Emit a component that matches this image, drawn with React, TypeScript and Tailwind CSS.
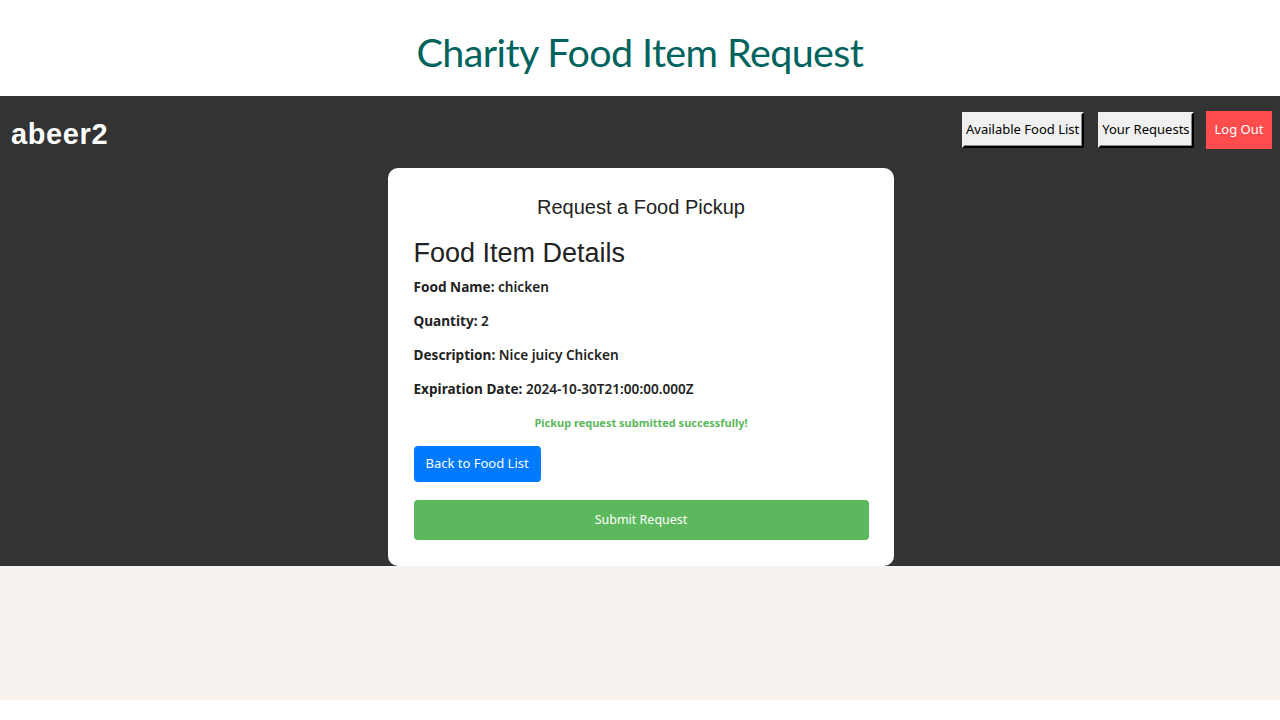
export default function App() {
  const details = [
    { label: "Food Name:", value: "chicken" },
    { label: "Quantity:", value: "2" },
    { label: "Description:", value: "Nice juicy Chicken" },
    { label: "Expiration Date:", value: "2024-10-30T21:00:00.000Z" },
  ];

  return (
    <div className="w-[1280px] h-[720px] bg-white flex flex-col">
      {/* Titulo do slide */}
      <div className="h-[96px] flex items-center justify-center">
        <h1 className="text-[39.5px] text-[#00635d] font-['Lato',sans-serif] tracking-[-0.6px] mt-[8px]">
          Charity Food Item Request
        </h1>
      </div>

      {/* Area escura com a navbar e o cartao */}
      <div className="h-[470px] bg-[#333333] flex flex-col">
        <div className="h-[72px] flex items-start justify-between pl-[11px] pr-[8px] pt-[15px]">
          <span className="text-white font-bold text-[29px] tracking-[0.6px] leading-[38px] font-['Liberation_Sans',Arial,sans-serif] mt-[4px]">
            abeer2
          </span>
          <div className="flex items-center font-['Noto_Sans',sans-serif] text-[13px] h-[38px]">
            <button className="h-[36px] px-[2.5px] bg-[#f0f0f0] text-black border-2 border-[#f0f0f0] border-r-black border-b-black shadow-[inset_-1px_-1px_0_#888]">
              Available Food List
            </button>
            <button className="ml-[14px] h-[36px] px-[2.5px] bg-[#f0f0f0] text-black border-2 border-[#f0f0f0] border-r-black border-b-black shadow-[inset_-1px_-1px_0_#888]">
              Your Requests
            </button>
            <button className="ml-[12px] h-[38px] px-[8.5px] bg-[#ff4d4d] text-white">Log Out</button>
          </div>
        </div>

        <div className="flex justify-center pl-[1px]">
          <div className="w-[506px] h-[398px] bg-white rounded-[10px] pl-[26px] pr-[25px] pt-[24px] flex flex-col">
            <h2 className="text-center text-[20px] text-[#222] font-['Liberation_Sans',Arial,sans-serif]">
              Request a Food Pickup
            </h2>
            <h3 className="text-[27px] text-[#222] font-['Liberation_Sans',Arial,sans-serif] mt-[12px] leading-[38px]">
              Food Item Details
            </h3>
            <div className="flex flex-col gap-[14px] mt-[5px] font-['Noto_Sans',sans-serif] text-[13.6px] text-[#222]">
              {details.map((d) => (
                <p key={d.label} className="leading-[20px] font-semibold">
                  <span className="font-bold">{d.label}</span> {d.value}
                </p>
              ))}
            </div>
            <p className="text-center mt-[15px] text-[11px] leading-[18px] font-bold text-[#5cb85c] font-['Noto_Sans',sans-serif]">
              Pickup request submitted successfully!
            </p>
            <div className="mt-[14px]">
              <button className="h-[36px] px-[12px] bg-[#007bff] text-white rounded-[4px] text-[13px] font-['Noto_Sans',sans-serif]">
                Back to Food List
              </button>
            </div>
            <button className="mt-[18px] w-full h-[40px] bg-[#5cb85c] text-white rounded-[4px] text-[12.5px] font-['Noto_Sans',sans-serif]">
              Submit Request
            </button>
          </div>
        </div>
      </div>

      <div className="h-[134px] bg-[#f7f2ee]" />
    </div>
  );
}
